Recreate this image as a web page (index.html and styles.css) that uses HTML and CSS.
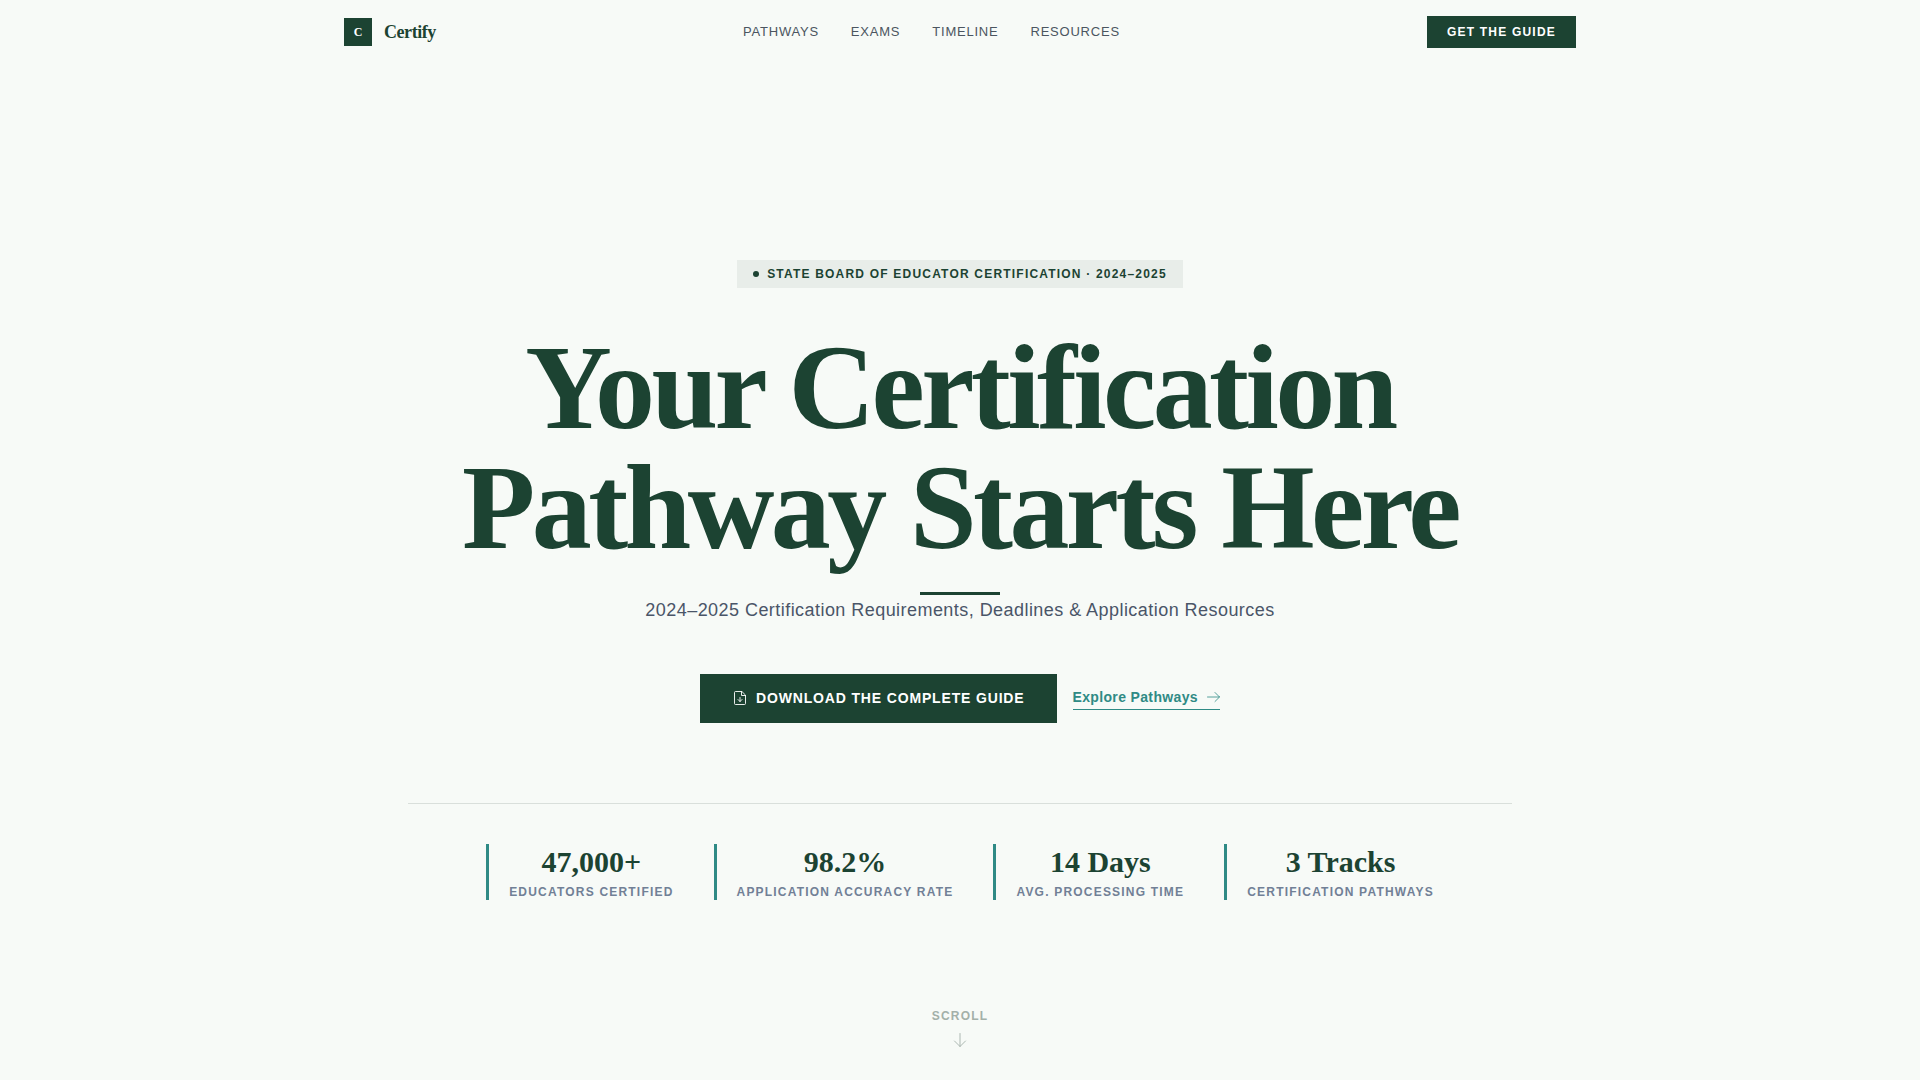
FILE: index.html
```html
<!DOCTYPE html>
<html lang="en">
<head>
<meta charset="utf-8">
<meta name="viewport" content="width=device-width, initial-scale=1">
<title>Certify</title>
<link rel="stylesheet" href="styles.css">
</head>
<body>
<header class="site-header">
  <a class="brand" href="#top"><span class="brand-mark">C</span><span class="brand-name">Certify</span></a>
  <nav class="site-nav" aria-label="Main">
    <a href="#pathways">Pathways</a>
    <a href="#exams">Exams</a>
    <a href="#timeline">Timeline</a>
    <a href="#resources">Resources</a>
  </nav>
  <button class="button button-small" type="button">Get the Guide</button>
</header>
<main class="hero" id="top">
  <div class="hero-content">
    <p class="badge"><span class="badge-dot"></span>State Board of Educator Certification · 2024–2025</p>
    <h1 class="title">Your Certification<br>Pathway Starts Here</h1>
    <div class="title-rule"></div>
    <p class="subtitle">2024–2025 Certification Requirements, Deadlines &amp; Application Resources</p>
    <div class="actions">
      <button class="button button-large" type="button">
        <svg class="icon" viewBox="0 0 16 16" aria-hidden="true"><path d="M9.5 .5H3.500a1 1 0 0 0-1 1v11a1 1 0 0 0 1 1h9a1 1 0 0 0 1-1v-8zM9.500 .5v4h4M8 6.500v4M6 8.500l2 2 2-2"/></svg>
        Download the Complete Guide
      </button>
      <a class="text-link" href="#pathways">Explore Pathways
        <svg class="icon icon-next" viewBox="0 0 14 14" aria-hidden="true"><path d="M1.5 7h12M9 2.5 13.5 7 9 11.5"/></svg>
      </a>
    </div>
    <dl class="stats">
      <div class="stat"><dt>Educators Certified</dt><dd>47,000+</dd></div>
      <div class="stat"><dt>Application Accuracy Rate</dt><dd>98.2%</dd></div>
      <div class="stat"><dt>Avg. Processing Time</dt><dd>14 Days</dd></div>
      <div class="stat"><dt>Certification Pathways</dt><dd>3 Tracks</dd></div>
    </dl>
  </div>
  <a class="scroll-cue" href="#pathways">Scroll
    <svg class="icon" viewBox="0 0 16 16" aria-hidden="true"><path d="M8 1.500v13M2.500 9 8 14.500 13.500 9"/></svg>
  </a>
</main>
</body>
</html>
```
FILE: styles.css
```css
:root {
  --green: #1c4332;
  --teal: #2f8a85;
  --paper: #f7faf7;
  --sans: "Liberation Sans", Arial, sans-serif;
  --serif: "Liberation Serif", "Times New Roman", serif;
}

* { box-sizing: border-box; margin: 0; padding: 0; }

body {
  display: flex;
  flex-direction: column;
  min-height: 100vh;
  background: var(--paper);
  color: var(--green);
  font-family: var(--sans);
}

a { color: inherit; text-decoration: none; }

.icon {
  width: 16px;
  height: 16px;
  flex: none;
  fill: none;
  stroke: currentColor;
  stroke-width: 0.9;
  stroke-linecap: round;
  stroke-linejoin: round;
}

.icon-next { width: 14px; height: 14px; stroke-width: 0.8; }

.button {
  display: inline-flex;
  align-items: center;
  justify-content: center;
  border: 0;
  background: var(--green);
  color: #fff;
  font-family: inherit;
  font-weight: 700;
  text-transform: uppercase;
  cursor: pointer;
}

.button-small {
  padding: 8px 20px;
  font-size: 12px;
  line-height: 16px;
  letter-spacing: 0.1em;
}

.button-large {
  gap: 8px;
  padding: 16px 32px;
  font-size: 14px;
  line-height: 17px;
  letter-spacing: 0.06em;
}

.site-header {
  display: flex;
  align-items: center;
  justify-content: space-between;
  width: 100%;
  max-width: 1280px;
  margin: 0 auto;
  padding: 16px 24px;
}

.brand { display: flex; align-items: center; gap: 12px; font-family: var(--serif); font-weight: 700; }

.brand-mark {
  display: grid;
  place-items: center;
  width: 28px;
  height: 28px;
  background: var(--green);
  color: #fff;
  font-size: 12px;
}

.brand-name { font-size: 18px; letter-spacing: -0.025em; }

.site-nav {
  display: flex;
  gap: 32px;
  color: #4b5560;
  font-size: 13px;
  line-height: 16px;
  letter-spacing: 0.06em;
  text-transform: uppercase;
}

.hero {
  display: flex;
  flex: 1;
  flex-direction: column;
  align-items: center;
  padding: 88px 24px 32px;
}

.hero-content {
  display: flex;
  flex-direction: column;
  align-items: center;
  width: 100%;
  max-width: 1104px;
  margin: auto;
  text-align: center;
}

.badge {
  display: flex;
  align-items: center;
  gap: 8px;
  padding: 6px 16px;
  background: #e8ede9;
  font-size: 12px;
  font-weight: 700;
  line-height: 16px;
  letter-spacing: 0.1em;
  text-transform: uppercase;
}

.badge-dot { width: 6px; height: 6px; border-radius: 50%; background: var(--green); }

.title {
  margin-top: 40px;
  font-family: var(--serif);
  font-size: 120px;
  line-height: 120px;
  letter-spacing: -0.03em;
}

.title-rule { width: 80px; height: 3px; margin-top: 24px; background: var(--green); }

.subtitle { color: #4a5568; font-size: 18px; line-height: 30px; letter-spacing: 0.025em; }

.actions { display: flex; align-items: center; gap: 16px; margin-top: 49px; }

.text-link {
  display: flex;
  align-items: center;
  gap: 8px;
  padding-bottom: 2px;
  border-bottom: 1px solid;
  color: var(--teal);
  font-size: 14px;
  font-weight: 700;
  line-height: 20px;
  letter-spacing: 0.025em;
}

.stats {
  display: flex;
  flex-wrap: wrap;
  justify-content: center;
  gap: 40px;
  width: 100%;
  margin-top: 80px;
  padding-top: 40px;
  border-top: 1px solid #d9dfdb;
}

.stat {
  display: flex;
  flex-direction: column-reverse;
  gap: 4px;
  padding-left: 20px;
  border-left: 3px solid var(--teal);
}

.stat dt {
  color: #718096;
  font-size: 12px;
  font-weight: 700;
  line-height: 16px;
  letter-spacing: 0.1em;
  text-transform: uppercase;
}

.stat dd { font-family: var(--serif); font-size: 30px; font-weight: 700; line-height: 36px; }

.scroll-cue {
  display: flex;
  flex-direction: column;
  align-items: center;
  gap: 8px;
  color: #a3b0a9;
  font-size: 12px;
  font-weight: 700;
  line-height: 16px;
  letter-spacing: 0.1em;
  text-transform: uppercase;
}
```
